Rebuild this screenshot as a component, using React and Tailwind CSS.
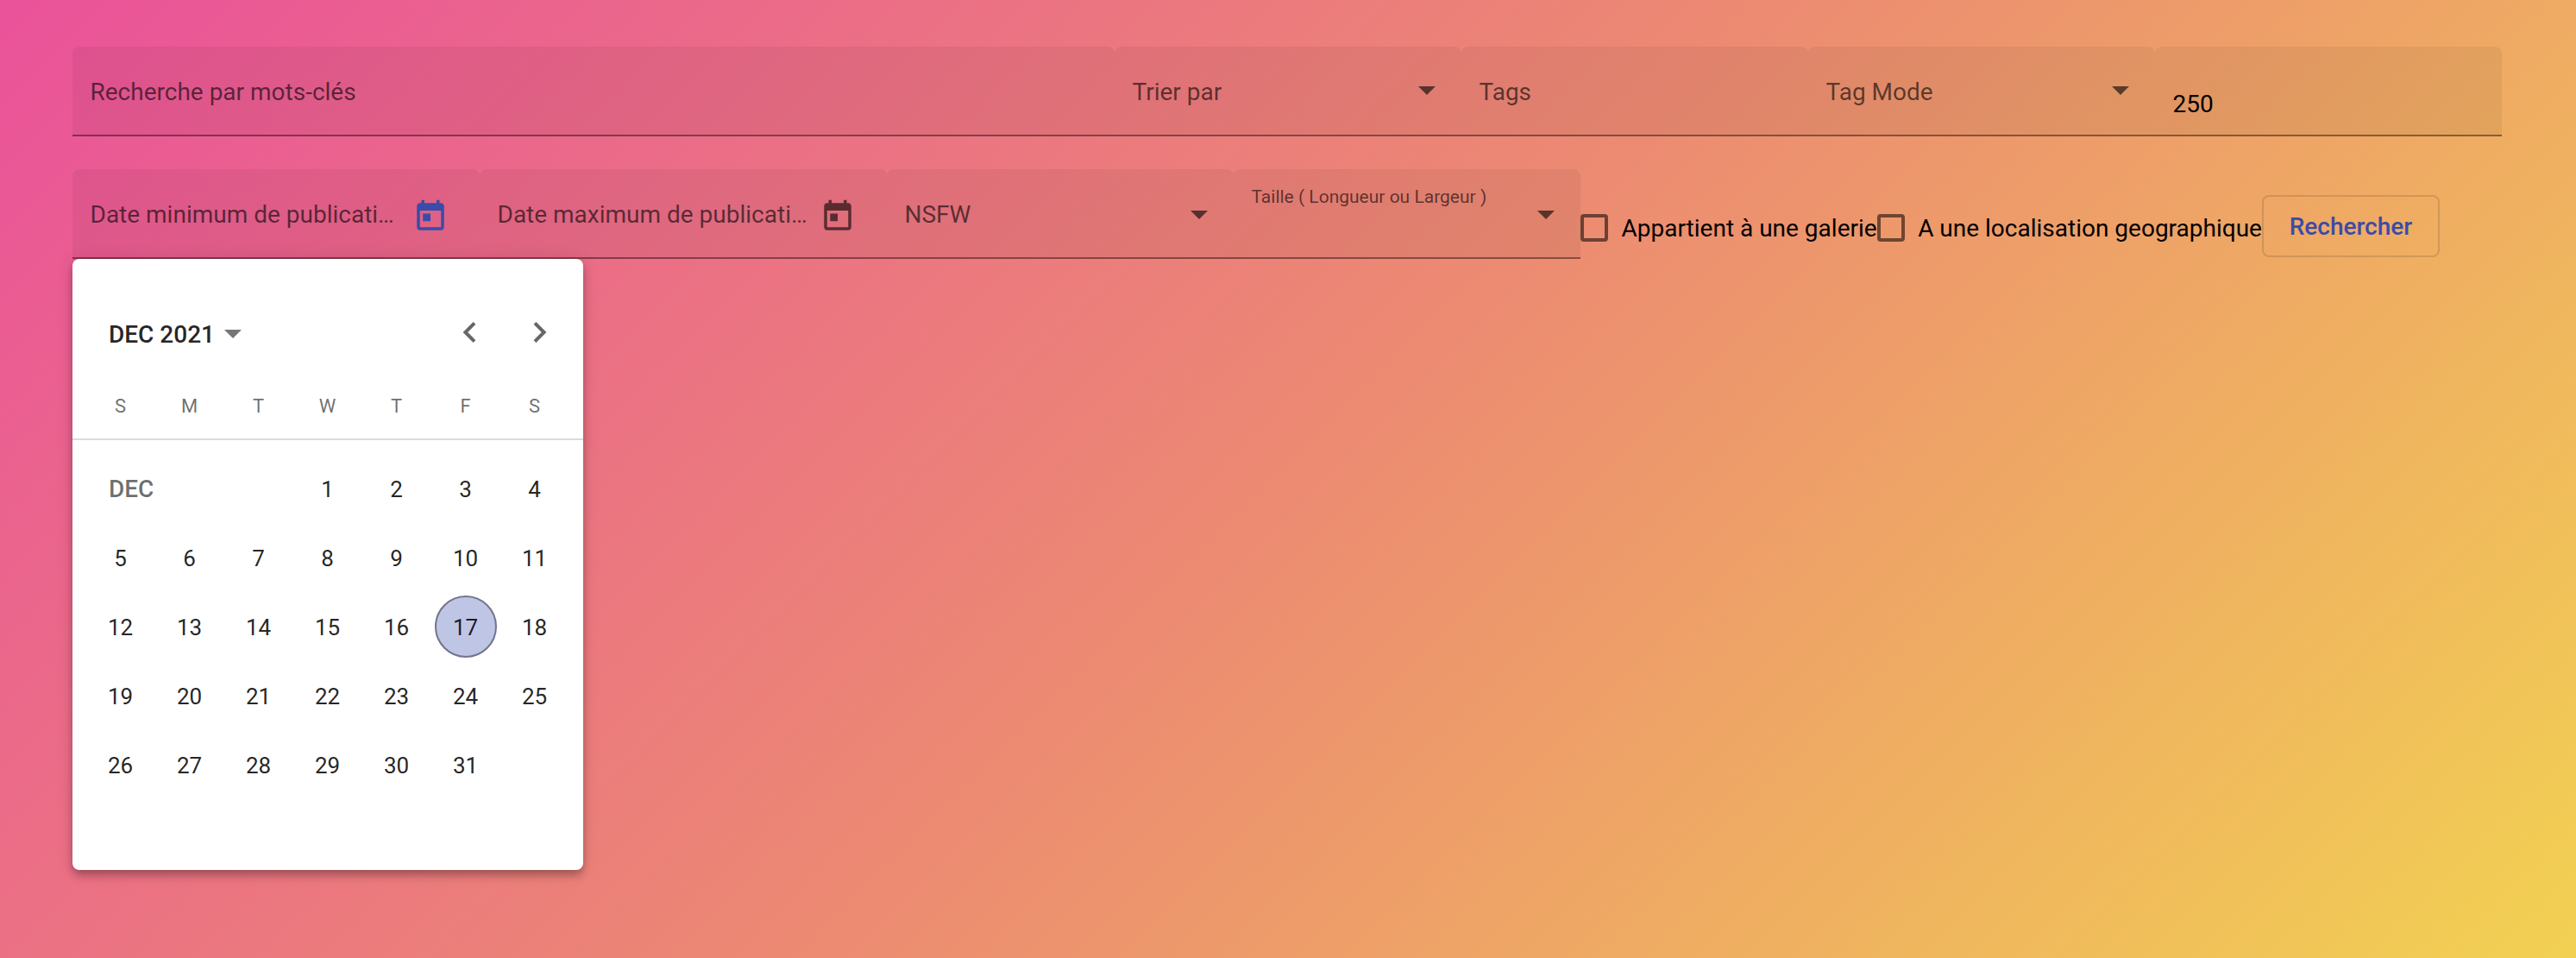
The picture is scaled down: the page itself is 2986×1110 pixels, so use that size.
function Arrow({ className = "" }) {
  return (
    <svg className={`h-[10px] w-5 shrink-0 ${className}`} viewBox="0 0 20 10" fill="currentColor">
      <path d="M0 0h20L10 10z" />
    </svg>
  );
}

function CalendarIcon({ className }) {
  return (
    <svg className={`size-[42px] shrink-0 ${className}`} viewBox="0 0 24 24" fill="currentColor">
      <path d="M19 3h-1V1h-2v2H8V1H6v2H5c-1.11 0-1.99.9-1.99 2L3 19c0 1.1.89 2 2 2h14c1.1 0 2-.9 2-2V5c0-1.1-.9-2-2-2zm0 16H5V8h14v11zM7 10h5v5H7z" />
    </svg>
  );
}

function Field({ width, children }) {
  return (
    <div className={`${width} flex h-[104px] shrink-0 items-start rounded-t-lg border-b-2 border-black/42 bg-black/5 pr-[21px] pl-[20.5px] text-black/60`}>
      {children}
    </div>
  );
}

function Label({ children }) {
  return <span className="mt-[37px] grow leading-8 whitespace-nowrap">{children}</span>;
}

function Check({ children }) {
  return (
    <label className="mt-[52px] flex h-8 shrink-0 items-center gap-[15.5px] text-black">
      <span className="size-8 rounded border-4 border-black/54" />
      <span className="mt-0.5 leading-8 whitespace-nowrap">{children}</span>
    </label>
  );
}

function Calendar() {
  const days = Array.from({ length: 31 }, (_, i) => i + 1);
  return (
    <div className="absolute top-[104px] left-0 h-[708px] w-[592px] rounded-lg bg-white text-black/87 shadow-[0_4px_8px_-2px_rgba(0,0,0,0.2),0_8px_10px_0_rgba(0,0,0,0.14),0_2px_20px_0_rgba(0,0,0,0.12)]">
      <div className="flex h-[136px] items-start pt-[72px] pr-[42px] pl-[42px]">
        <span className="leading-8 font-medium">DEC 2021</span>
        <Arrow className="mt-[10px] ml-[11px] text-black/54" />
        <svg className="mt-[1px] ml-auto h-6 w-4 text-black/60" viewBox="0 0 16 24" fill="none" stroke="currentColor" strokeWidth="4">
          <path d="M14 1.4 3.4 12 14 22.6" />
        </svg>
        <svg className="mt-[1px] ml-[66px] h-6 w-4 text-black/60" viewBox="0 0 16 24" fill="none" stroke="currentColor" strokeWidth="4">
          <path d="M2 1.4 12.6 12 2 22.6" />
        </svg>
      </div>
      <div className="grid h-[74px] grid-cols-7 border-b-2 border-black/14 px-4 pt-[19px] text-center text-[22px] leading-8 text-black/58">
        {["S", "M", "T", "W", "T", "F", "S"].map((d, i) => (
          <span key={i} className="pr-px">{d}</span>
        ))}
      </div>
      <div className="mt-4 grid grid-cols-7 px-4 text-[26px]">
        <span className="col-span-3 h-20 pl-[26px] text-[28px] leading-[82px] font-medium text-black/58">DEC</span>
        {days.map((d) => (
          <div key={d} className="flex h-20 items-center justify-center">
            <span className={`flex size-[72px] items-center justify-center rounded-full pt-0.5 pr-px ${d === 17 ? "border-2 border-[#70758c] bg-[#bfc5e5]" : ""}`}>{d}</span>
          </div>
        ))}
      </div>
    </div>
  );
}

export default function App() {
  return (
    <main className="h-[1110px] w-[2986px] overflow-hidden bg-[linear-gradient(135deg,#ea529a_0%,#ec8a72_50%,#f2d152_100%)] px-[84px] pt-[54px] font-['Roboto',sans-serif] text-[28px]">
      <div className="flex">
        <Field width="w-[1208px]"><Label>Recherche par mots-clés</Label></Field>
        <Field width="w-[402px]"><Label>Trier par</Label><Arrow className="mt-[46px] mr-[9px]" /></Field>
        <Field width="w-[402px]"><Label>Tags</Label></Field>
        <Field width="w-[402px]"><Label>Tag Mode</Label><Arrow className="mt-[46px] mr-[9px]" /></Field>
        <Field width="w-[402px]"><span className="mt-[51px] leading-8 text-black">250</span></Field>
      </div>
      <div className="relative mt-[38px] flex">
        <Field width="w-[472px]">
          <Label>Date minimum de publicati…</Label>
          <CalendarIcon className="mt-[34px] mr-[15px] text-[#3a4ba9]" />
        </Field>
        <Field width="w-[472px]">
          <Label>Date maximum de publicati…</Label>
          <CalendarIcon className="mt-[34px] mr-[15px]" />
        </Field>
        <Field width="w-[402px]"><Label>NSFW</Label><Arrow className="mt-[48px] mr-[9px]" /></Field>
        <Field width="w-[402px]">
          <span className="mt-4 grow text-[21px] leading-8 whitespace-nowrap">Taille ( Longueur ou Largeur )</span>
          <Arrow className="mt-[48px] mr-[9px]" />
        </Field>
        <Check>Appartient à une galerie</Check>
        <Check>A une localisation geographique</Check>
        <button className="mt-[30px] h-[72px] w-[206px] shrink-0 rounded-lg border-2 border-black/12 pt-0.5 font-medium text-[#3a4ba9]">Rechercher</button>
        <Calendar />
      </div>
    </main>
  );
}
